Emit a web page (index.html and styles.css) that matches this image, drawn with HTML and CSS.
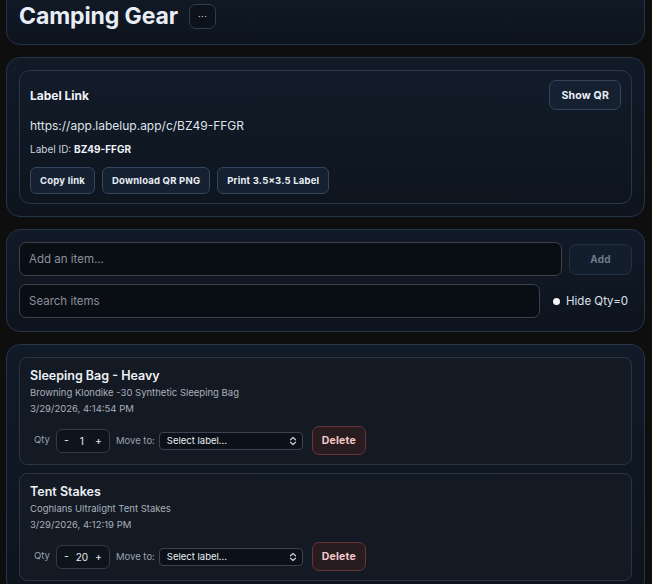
FILE: index.html
```html
<!DOCTYPE html>
<html lang="en">

<head>
    <meta charset="UTF-8">
    <meta name="viewport" content="width=device-width, initial-scale=1.0">
    <title>Camping Gear</title>
    <link rel="stylesheet" href="styles.css">
</head>

<body>
    <div class="page">
        <div class="card header-card">
            <h1>Camping Gear</h1>
            <button class="more-btn">&middot;&middot;&middot;</button>
        </div>

        <div class="card">
            <div class="inner label-box">
                <div class="label-head">
                    <span class="label-title">Label Link</span>
                    <button class="btn btn-lg">Show QR</button>
                </div>
                <div class="label-url">https://app.labelup.app/c/BZ49-FFGR</div>
                <div class="label-id">Label ID: <b>BZ49-FFGR</b></div>
                <div class="label-actions">
                    <button class="btn">Copy link</button>
                    <button class="btn">Download QR PNG</button>
                    <button class="btn">Print 3.5×3.5 Label</button>
                </div>
            </div>
        </div>

        <div class="card form-card">
            <div class="form-row">
                <input type="text" class="field" placeholder="Add an item...">
                <button class="btn add-btn" disabled>Add</button>
            </div>
            <div class="form-row">
                <input type="text" class="field" placeholder="Search items">
                <label class="toggle"><span class="dot"></span>Hide Qty=0</label>
            </div>
        </div>

        <div class="card list-card">
            <div class="inner item">
                <div class="item-name">Sleeping Bag - Heavy</div>
                <div class="item-desc">Browning Klondike -30 Synthetic Sleeping Bag</div>
                <div class="item-date">3/29/2026, 4:14:54 PM</div>
                <div class="item-controls">
                    <span class="ctl-label qty-label">Qty</span>
                    <div class="stepper"><span>-</span><span class="num">1</span><span>+</span></div>
                    <span class="ctl-label">Move to:</span>
                    <div class="select">Select label...
                        <svg width="8" height="10" viewBox="0 0 8 10"><path d="M1.5 3.8 4 1.5l2.5 2.3M1.5 6.2 4 8.5l2.5-2.3" fill="none" stroke="#c9ced6" stroke-width="1.2" stroke-linecap="round" stroke-linejoin="round"/></svg>
                    </div>
                    <button class="btn delete-btn">Delete</button>
                </div>
            </div>

            <div class="inner item">
                <div class="item-name">Tent Stakes</div>
                <div class="item-desc">Coghlans Ultralight Tent Stakes</div>
                <div class="item-date">3/29/2026, 4:12:19 PM</div>
                <div class="item-controls">
                    <span class="ctl-label qty-label">Qty</span>
                    <div class="stepper"><span>-</span><span class="num">20</span><span>+</span></div>
                    <span class="ctl-label">Move to:</span>
                    <div class="select">Select label...
                        <svg width="8" height="10" viewBox="0 0 8 10"><path d="M1.5 3.8 4 1.5l2.5 2.3M1.5 6.2 4 8.5l2.5-2.3" fill="none" stroke="#c9ced6" stroke-width="1.2" stroke-linecap="round" stroke-linejoin="round"/></svg>
                    </div>
                    <button class="btn delete-btn">Delete</button>
                </div>
            </div>
        </div>
    </div>
</body>
</html>
```

FILE: styles.css
```css
* {
    margin: 0;
    padding: 0;
    box-sizing: border-box;
    font-family: Inter, "Noto Sans", sans-serif;
}

body {
    background-color: #0e0e0f;
    color: #e6ebf2;
    overflow: hidden;
}

.page {
    display: flex;
    flex-direction: column;
    gap: 12px;
    padding: 0 7px 0 6px;
    margin-top: -13px;
}

.card {
    background: linear-gradient(180deg, #111a27 0%, #0d141e 100%);
    border: 1px solid #263549;
    border-radius: 14px;
    padding: 12px;
}

.header-card {
    display: flex;
    align-items: center;
    gap: 11px;
    padding: 14px 12px 14px 12px;
}

h1 {
    font-size: 23px;
    font-weight: 700;
    line-height: 28px;
    color: #e9eef6;
    letter-spacing: -0.1px;
}

.more-btn {
    width: 27px;
    height: 25px;
    background-color: #0c121b;
    border: 1px solid #323d4c;
    border-radius: 7px;
    color: #c9d0da;
    font-size: 9px;
    letter-spacing: 0.5px;
    margin-top: 1px;
}

.inner {
    background: linear-gradient(180deg, #121b28 0%, #0e151f 100%);
    border: 1px solid #2a3749;
    border-radius: 11px;
    padding: 9px 10px 9px 10px;
}

.label-head {
    display: flex;
    justify-content: space-between;
    align-items: center;
}

.label-title {
    font-size: 12px;
    font-weight: 700;
    color: #eef2f7;
}

.label-url {
    font-size: 12px;
    line-height: 18px;
    margin-top: 7px;
    color: #dfe4eb;
}

.label-id {
    font-size: 10px;
    line-height: 16px;
    margin-top: 6px;
    color: #cdd3dc;
}

.label-id b {
    color: #eef2f7;
}

.label-actions {
    display: flex;
    gap: 7px;
    margin-top: 10px;
}

.btn {
    background-color: #152031;
    border: 1px solid #33465e;
    border-radius: 6px;
    color: #e9eef5;
    font-size: 9.5px;
    font-weight: 700;
    height: 27px;
    padding: 0 9px;
    letter-spacing: 0.2px;
}

.btn-lg {
    height: 30px;
    padding: 0 11px;
    font-size: 10.5px;
    border-radius: 7px;
}

.form-card {
    display: flex;
    flex-direction: column;
    gap: 8px;
    padding-bottom: 13px;
}

.form-row {
    display: flex;
    align-items: center;
    gap: 7px;
}

.field {
    flex: 1;
    height: 34px;
    background-color: #090e15;
    border: 1px solid #3d4148;
    border-radius: 7px;
    padding: 0 9px;
    font-size: 11.5px;
    color: #e6ebf2;
    outline: none;
}

.field::placeholder {
    color: #8b9099;
}

.add-btn {
    width: 63px;
    height: 31px;
    background-color: #131e2c;
    border-color: #223042;
    color: #6f7987;
    font-size: 10px;
    border-radius: 7px;
}

.toggle {
    display: flex;
    align-items: center;
    gap: 6px;
    font-size: 11.5px;
    color: #dde2ea;
    margin-left: 6px;
    padding-right: 4px;
}

.dot {
    width: 7px;
    height: 7px;
    border-radius: 50%;
    background-color: #f2f4f7;
}

.list-card {
    display: flex;
    flex-direction: column;
    gap: 8px;
}

.list-card .inner {
    background: #131a24;
    border-color: #2b3441;
    border-radius: 8px;
}

.item {
    padding: 10px 10px 9px 10px;
}

.item-name {
    font-size: 12.5px;
    font-weight: 600;
    line-height: 16px;
    color: #edf1f6;
}

.item-desc,
.item-date {
    font-size: 9.5px;
    line-height: 14px;
    color: #a9b0ba;
    margin-top: 2px;
}

.item-controls {
    display: flex;
    align-items: center;
    margin-top: 10px;
    padding-left: 4px;
}

.ctl-label {
    font-size: 9.5px;
    color: #9aa2ad;
    margin-right: 4px;
}

.qty-label {
    margin-right: 6px;
    margin-top: -3px;
}

.stepper {
    display: flex;
    align-items: center;
    justify-content: space-between;
    width: 54px;
    height: 24px;
    border: 1px solid #323b48;
    border-radius: 6px;
    background-color: #0e141c;
    padding: 0 7px;
    font-size: 10.5px;
    color: #e8ecf2;
    margin-right: 6px;
}

.stepper .num {
    font-size: 10px;
}

.select {
    display: flex;
    align-items: center;
    justify-content: space-between;
    width: 144px;
    height: 18px;
    border: 1px solid #3b4452;
    border-radius: 4px;
    background-color: #0b1118;
    padding: 0 5px 0 7px;
    font-size: 9.5px;
    color: #e9edf3;
    margin-right: 9px;
}

.delete-btn {
    height: 29px;
    width: 54px;
    padding: 0;
    background-color: #281c21;
    border-color: #6b3337;
    color: #f3c9c9;
    font-size: 10.5px;
    border-radius: 7px;
}
```
